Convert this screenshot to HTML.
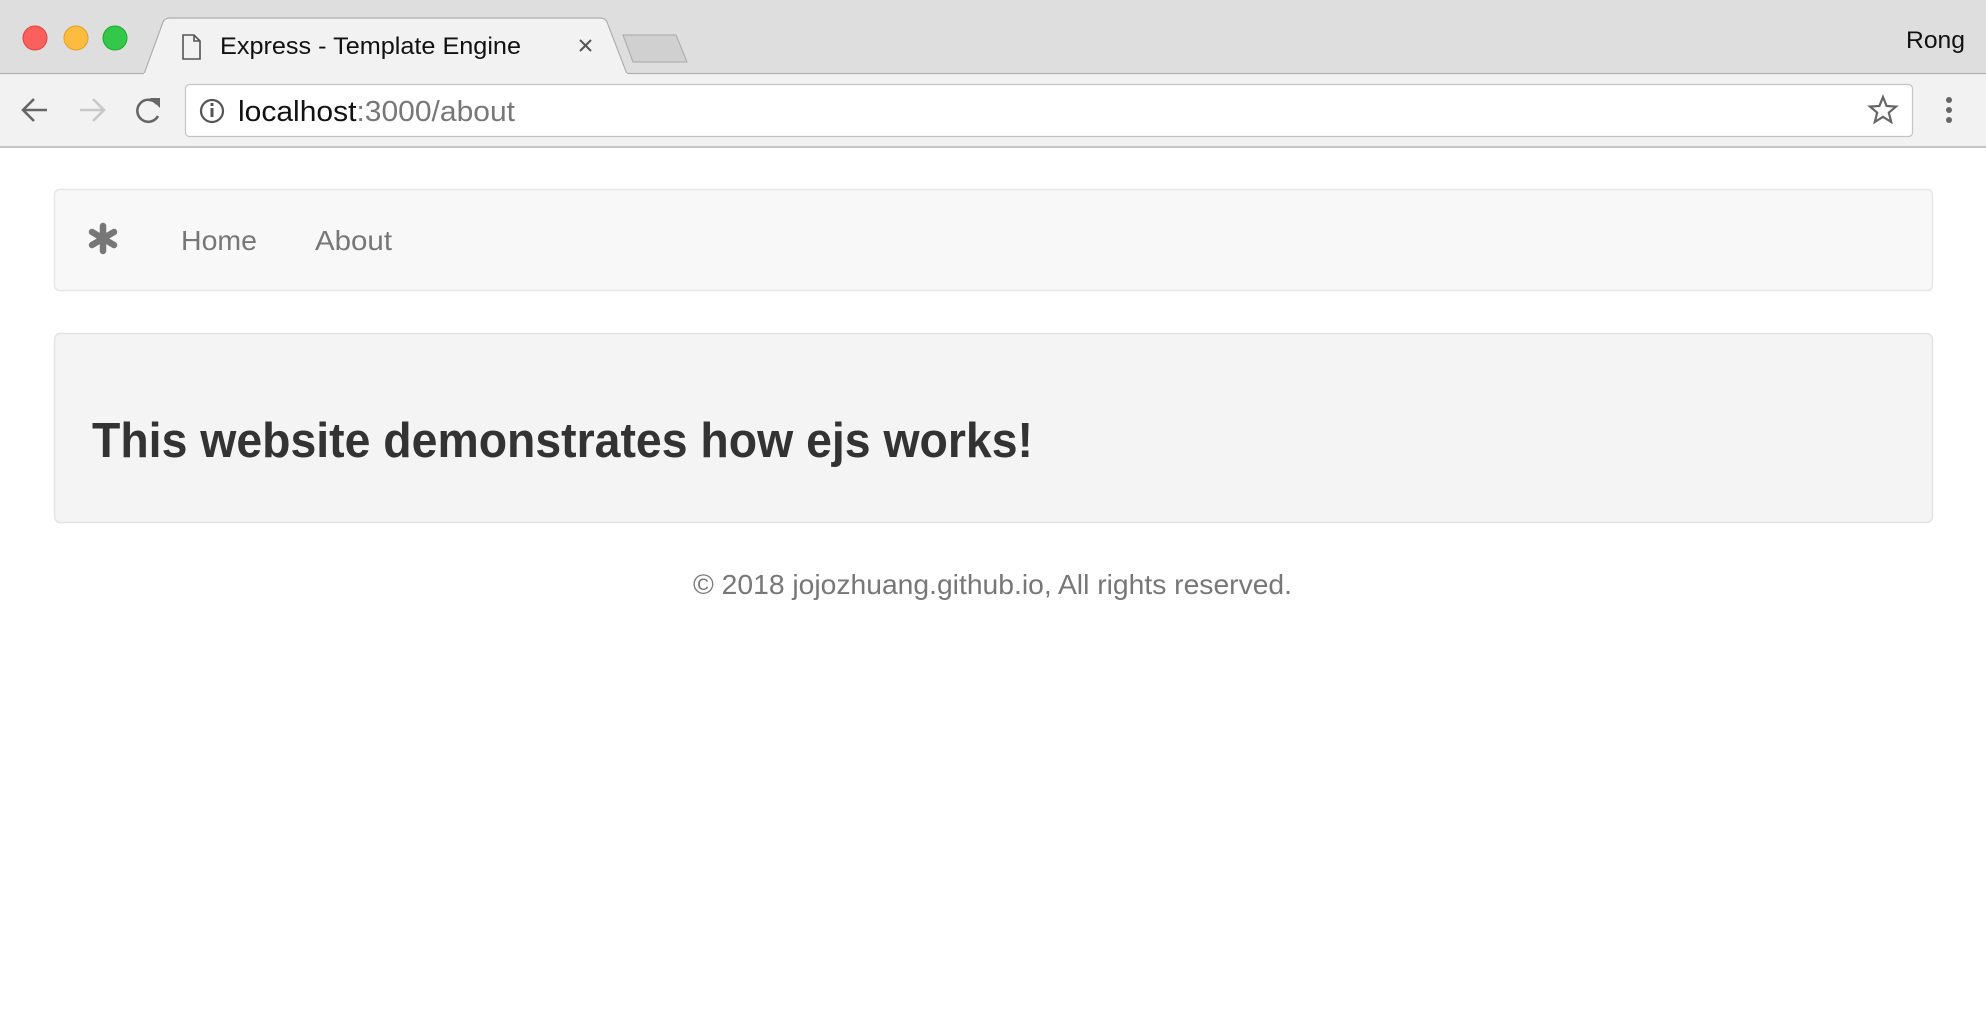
<!DOCTYPE html>
<html><head><meta charset="utf-8"><style>
html,body{margin:0;padding:0;width:1986px;height:1032px;overflow:hidden;background:#fff}
svg{display:block}
text{font-family:"Liberation Sans",Arial,sans-serif}
</style></head><body>
<svg width="1986" height="1032" viewBox="0 0 1986 1032" xmlns="http://www.w3.org/2000/svg">
<rect x="0" y="0" width="1986" height="73" fill="#dedede"/>
<circle cx="35" cy="38" r="12" fill="#fc605c" stroke="#e0443e" stroke-width="1"/>
<circle cx="76" cy="38" r="12" fill="#fdbc40" stroke="#dea123" stroke-width="1"/>
<circle cx="115" cy="38" r="12" fill="#34c84a" stroke="#1aab29" stroke-width="1"/>
<path d="M144 74 L163 22 Q165 18 170 18 L600 18 Q605 18 607 22 L627 74 Z" fill="#f2f2f2" stroke="#b0b0b0" stroke-width="1.2"/>
<path d="M623 35 L676 35 L687 62 L633 62 Z" fill="#d0d0d0" stroke="#b0b0b0" stroke-width="1.2" stroke-linejoin="round"/>
<path d="M183 35 L194 35 L200 41 L200 59 L183 59 Z M194 35 L194 41 L200 41" fill="none" stroke="#555" stroke-width="1.6"/>
<text x="220" y="54" font-size="24" fill="#111" textLength="301" lengthAdjust="spacingAndGlyphs">Express - Template Engine</text>
<path d="M580 40 L591 51 M591 40 L580 51" stroke="#555" stroke-width="2"/>
<text x="1906" y="48" font-size="24" fill="#111" textLength="59" lengthAdjust="spacingAndGlyphs">Rong</text>
<rect x="0" y="73" width="1986" height="74" fill="#f2f2f2"/>
<line x1="0" y1="73.5" x2="144" y2="73.5" stroke="#b0b0b0" stroke-width="1.2"/>
<line x1="627" y1="73.5" x2="1986" y2="73.5" stroke="#b0b0b0" stroke-width="1.2"/>
<line x1="0" y1="147" x2="1986" y2="147" stroke="#b5b5b5" stroke-width="1.5"/>
<path d="M47 110 L23 110 M34 99 L23 110 L34 121" fill="none" stroke="#666" stroke-width="2.6"/>
<path d="M80 110 L104 110 M93 99 L104 110 L93 121" fill="none" stroke="#c8c8c8" stroke-width="2.6"/>
<path d="M157 104 A11 11 0 1 0 158 116" fill="none" stroke="#666" stroke-width="2.6"/>
<path d="M150 98 L160 98 L160 108 Z" fill="#666"/>
<rect x="185.5" y="84.5" width="1727" height="52" rx="4" fill="#fff" stroke="#c4c4c4" stroke-width="1.2"/>
<circle cx="212" cy="111" r="11" fill="none" stroke="#555" stroke-width="2.2"/>
<rect x="210.5" y="108" width="3" height="9" fill="#555"/>
<rect x="210.5" y="103" width="3" height="3" fill="#555"/>
<text x="238" y="121" font-size="29" textLength="277" lengthAdjust="spacingAndGlyphs"><tspan fill="#111">localhost</tspan><tspan fill="#777">:3000/about</tspan></text>
<path d="M1883 97 L1886.6 106 L1896 106.6 L1888.8 112.6 L1891.2 122 L1883 116.8 L1874.8 122 L1877.2 112.6 L1870 106.6 L1879.4 106 Z" fill="none" stroke="#666" stroke-width="2.2"/>
<circle cx="1949" cy="100" r="3" fill="#666"/>
<circle cx="1949" cy="110" r="3" fill="#666"/>
<circle cx="1949" cy="120" r="3" fill="#666"/>
<rect x="54.5" y="189.5" width="1878" height="101" rx="5" fill="#f8f8f8" stroke="#e7e7e7" stroke-width="1.5"/>
<g stroke="#777" stroke-width="6.5" stroke-linecap="round">
<line x1="103" y1="226" x2="103" y2="251"/>
<line x1="92" y1="232" x2="114" y2="245"/>
<line x1="92" y1="245" x2="114" y2="232"/>
</g>
<text x="181" y="250" font-size="28" fill="#777" textLength="76" lengthAdjust="spacingAndGlyphs">Home</text>
<text x="315" y="250" font-size="28" fill="#777" textLength="77" lengthAdjust="spacingAndGlyphs">About</text>
<rect x="54.5" y="333.5" width="1878" height="189" rx="6" fill="#f4f4f4" stroke="#e3e3e3" stroke-width="1.5"/>
<text x="92" y="457" font-size="49" font-weight="bold" fill="#333" textLength="941" lengthAdjust="spacingAndGlyphs">This website demonstrates how ejs works!</text>
<text x="693" y="594" font-size="28" fill="#777" textLength="599" lengthAdjust="spacingAndGlyphs">© 2018 jojozhuang.github.io, All rights reserved.</text>
</svg>
</body></html>
